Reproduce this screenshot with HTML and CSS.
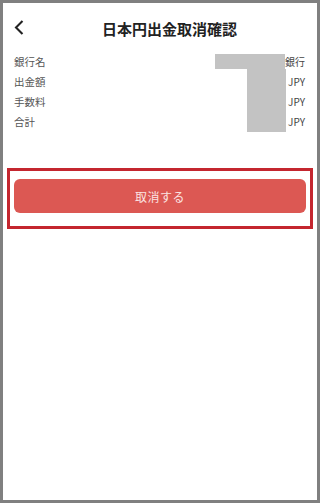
FILE: index.html
```html
<!DOCTYPE html>
<html lang="ja">
<head>
  <meta charset="UTF-8">
  <title>日本円出金取消確認</title>
  <meta name="viewport" content="width=device-width, initial-scale=1.0">
  <link rel="stylesheet" href="styles.css">
</head>
<body>
<div class="screen">
  <header class="topbar">
    <a class="back" href="#">
      <svg width="10" height="15" viewBox="0 0 10 15"><path d="M8.5 1 L2 7.5 L8.5 14" fill="none" stroke="#222" stroke-width="2.1"/></svg>
    </a>
    <h1>日本円出金取消確認</h1>
  </header>

  <div class="details">
    <div class="row">
      <span class="label">銀行名</span>
      <span class="value"><span class="mask mask-bank"></span>銀行</span>
    </div>
    <div class="row">
      <span class="label">出金額</span>
      <span class="value">JPY</span>
    </div>
    <div class="row">
      <span class="label">手数料</span>
      <span class="value">JPY</span>
    </div>
    <div class="row">
      <span class="label">合計</span>
      <span class="value">JPY</span>
    </div>
    <!-- redacted amounts -->
    <span class="mask mask-amounts"></span>
  </div>

  <div class="highlight">
    <button class="cancelbtn">取消する</button>
  </div>
</div>
</body>
</html>
```

FILE: styles.css
```css
body {
  margin: 0;
  background: #fff;
  font-family: "Noto Sans CJK JP", "Noto Sans", sans-serif;
}

.screen {
  width: 320px;
  height: 503px;
  box-sizing: border-box;
  border: 3px solid #808080;
  background: #fff;
}

.topbar {
  height: 48px;
  display: flex;
  align-items: center;
  padding-left: 11px;
}

.back {
  display: flex;
  width: 10px;
  height: 15px;
}

.topbar h1 {
  flex: 1;
  margin: 0;
  padding-left: 8px;
  padding-right: 10px;
  text-align: center;
  font-size: 15px;
  font-weight: bold;
  color: #222;
  line-height: 1;
  margin-top: 2px;
}

.details {
  position: relative;
  padding: 0 12px 0 11px;
}

.row {
  height: 20px;
  display: flex;
  align-items: center;
  justify-content: space-between;
}

.label {
  font-size: 10.5px;
  color: #555;
}

.value {
  display: flex;
  align-items: center;
  font-size: 10px;
  color: #444;
}

.mask {
  background: #c3c3c3;
}

.mask-bank {
  display: inline-block;
  width: 70px;
  height: 15px;
}

.mask-amounts {
  position: absolute;
  top: 18px;
  right: 31px;
  width: 39px;
  height: 63px;
}

.highlight {
  margin: 37px 4px 0 4px;
  border: 3px solid #c4262f;
  padding: 8px 4px 13px 4px;
}

.cancelbtn {
  display: block;
  width: 100%;
  height: 34px;
  border: none;
  border-radius: 6px;
  background: #dc5853;
  color: #fbe4e2;
  font-family: inherit;
  font-size: 12px;
  letter-spacing: 0.5px;
}
```
